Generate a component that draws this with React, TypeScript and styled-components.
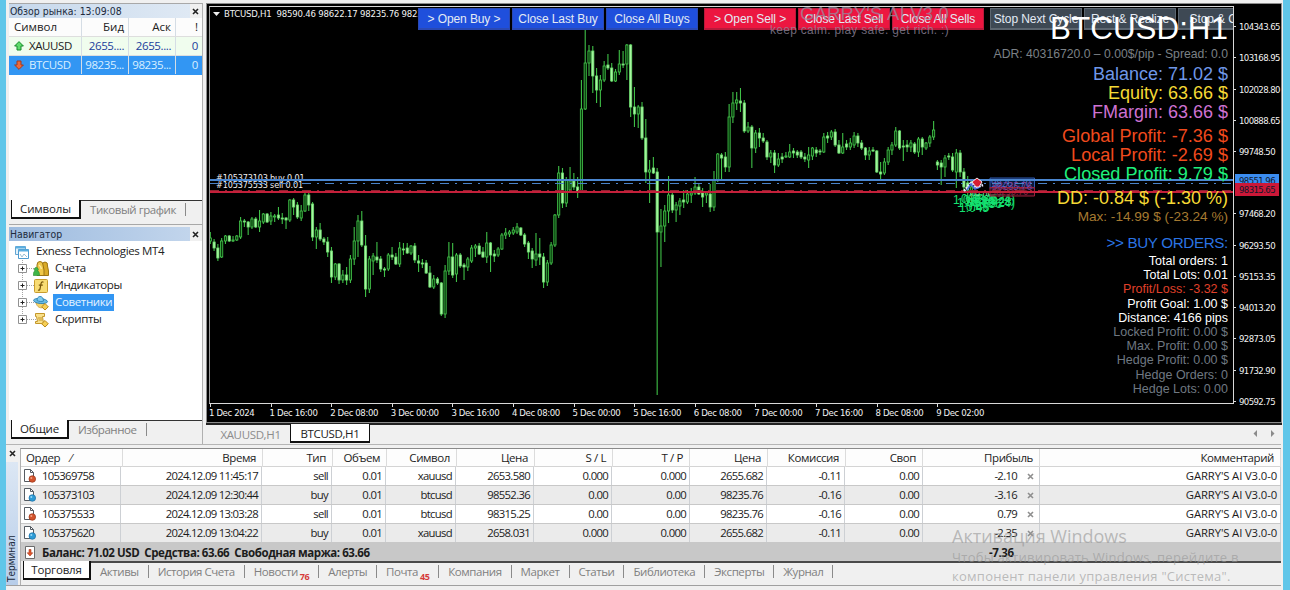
import React from 'react';
import styled, { createGlobalStyle } from 'styled-components';

const UI_FONT = `'Open Sans', 'Noto Sans', sans-serif`;
const CHART_FONT = `'DejaVu Sans Condensed', 'DejaVu Sans', sans-serif`;
const ARIAL = `'Liberation Sans', Arial, sans-serif`;

const GlobalStyle = createGlobalStyle`
	* {
		box-sizing: border-box;
	}
	body {
		margin: 0;
		overflow: hidden;
		font-family: ${UI_FONT};
		font-size: 11.5px;
		color: #1c1c1c;
		background: #f0f0f0;
	}
`;

const Desktop = styled.div`
	width: 1290px;
	height: 590px;
	display: flex;
	background: #f0f0f0;
	overflow: hidden;
	position: relative;
`;
const Edge = styled.div<{ $width: number }>`
	width: ${({ $width }) => $width}px;
	flex: none;
	background: #60c6e9;
`;
const Window = styled.div`
	flex: 1;
	min-width: 0;
	display: flex;
	flex-direction: column;
`;
const Upper = styled.div`
	display: flex;
	height: 444px;
	flex: none;
`;
const SideColumn = styled.div`
	width: 198px;
	flex: none;
	display: flex;
	flex-direction: column;
	padding: 3px 1px 0 3px;
`;
const Panel = styled.div<{ $height: number }>`
	height: ${({ $height }) => $height}px;
	flex: none;
	display: flex;
	flex-direction: column;
	border-top: 1px solid #a8a8a8;
	border-right: 1px solid #b0b0b0;
`;
const PanelTitle = styled.div`
	height: 14px;
	flex: none;
	display: flex;
	align-items: center;
	justify-content: space-between;
	padding: 0 3px 0 1px;
	font-family: ${CHART_FONT};
	font-size: 10.4px;
	line-height: 12px;
	color: #202a3c;
	background: linear-gradient(90deg, #c6d8ec, #dfe9f4 94%, #f0f0f0 94%);
`;
const NavTitle = styled(PanelTitle)`
	margin-top: 2px;
	background: linear-gradient(90deg, #9dbbdf, #c2d5ec 94%, #f0f0f0 94%);
`;
const PanelBody = styled.div`
	flex: 1;
	min-height: 0;
	background: #fff;
`;
const CloseMark = styled.svg`
	width: 7px;
	height: 7px;
	flex: none;
`;

const MarketRow = styled.div<{ $kind: 'head' | 'up' | 'selected' }>`
	display: grid;
	grid-template-columns: 73px 47px 47px 1fr;
	height: 19px;
	letter-spacing: ${({ $kind }) => ($kind === 'head' ? 0 : -0.4)}px;
	line-height: 18px;
	color: ${({ $kind }) => ({ head: '#222', up: '#21409c', selected: '#d9efff' })[$kind]};
	background: ${({ $kind }) => ({ head: '#fcfcfc', up: '#f0fdee', selected: '#3296f3' })[$kind]};
	border-bottom: 1px solid ${({ $kind }) => ($kind === 'selected' ? '#3296f3' : '#dedede')};
`;
const MarketCell = styled.div<{ $symbol?: boolean; $dark?: boolean }>`
	display: flex;
	align-items: center;
	justify-content: ${({ $symbol }) => ($symbol ? 'flex-start' : 'flex-end')};
	gap: 5px;
	padding: 0 4px 0 ${({ $symbol }) => ($symbol ? 5 : 0)}px;
	border-right: 1px solid #d5dde5;
	color: ${({ $dark }) => ($dark ? '#222' : 'inherit')};
	white-space: nowrap;
	&:last-child {
		border-right: 0;
	}
`;

const SheetTabs = styled.div`
	height: 24px;
	flex: none;
	display: flex;
	padding-left: 2px;
	background: #f0f0f0;
`;
const ActiveSheet = styled.div<{ $width: number }>`
	width: ${({ $width }) => $width}px;
	flex: none;
	height: 19px;
	border: solid #111;
	border-width: 0 2px 2px 1px;
	background: #fff;
	text-align: center;
	line-height: 18px;
	letter-spacing: -0.15px;
`;
const SheetRest = styled.div<{ $heavy?: boolean }>`
	flex: 1;
	display: flex;
	align-items: flex-start;
	border-top: ${({ $heavy }) => ($heavy ? '2px solid #4a4a4a' : '1px solid #333')};
	color: #808080;
`;
const Sheet = styled.div`
	padding: 0 9px;
	margin-top: 2px;
	height: 13px;
	line-height: 13px;
	letter-spacing: -0.44px;
	border-right: 1px solid #8a8a8a;
	white-space: nowrap;
`;

const Tree = styled.div`
	display: flex;
	flex-direction: column;
	padding: 2px 0 0 6px;
`;
const TreeRow = styled.div<{ $child?: boolean }>`
	display: flex;
	align-items: center;
	height: 17px;
	gap: ${({ $child }) => ($child ? 4 : 5)}px;
	padding-left: ${({ $child }) => ($child ? 3 : 0)}px;
	letter-spacing: -0.35px;
	color: #222;
`;
const TreeLabel = styled.span<{ $selected?: boolean }>`
	height: 17px;
	line-height: 16px;
	padding: 0 2px;
	white-space: nowrap;
	color: ${({ $selected }) => ($selected ? '#e4f3ff' : 'inherit')};
	background: ${({ $selected }) => ($selected ? '#3296f3' : 'transparent')};
`;

const ChartColumn = styled.div`
	flex: 1;
	min-width: 0;
	padding: 3px 1px 0 2px;
	display: flex;
	flex-direction: column;
`;
const ChartWindow = styled.div`
	height: 420px;
	flex: none;
	position: relative;
	background: #000;
	border: 1px solid #8c8c8c;
	padding: 2px 0 0 2px;
	display: grid;
	grid-template-columns: 1025px 1fr;
	grid-template-rows: 398px 1fr;
	overflow: hidden;
	font-family: ${CHART_FONT};
	color: #f2f2f2;
`;
const Plot = styled.div`
	position: relative;
	overflow: hidden;
	border: 1px solid #d8d8d8;
	border-left-color: #999;
`;
const Drawing = styled.svg`
	position: absolute;
	left: -1px;
	top: -1px;
`;
const PriceAxis = styled.div`
	position: relative;
	padding-top: 5px;
	font-size: 9.5px;
	letter-spacing: -0.6px;
`;
const Price = styled.div<{ $hidden?: boolean }>`
	height: 31.22px;
	display: flex;
	align-items: center;
	gap: 3px;
	visibility: ${({ $hidden }) => ($hidden ? 'hidden' : 'visible')};
	&::before {
		content: '';
		width: 2px;
		height: 1px;
		background: #ddd;
	}
`;
const PriceTag = styled.div<{ $top: number; $color: string }>`
	position: absolute;
	left: 1px;
	top: ${({ $top }) => $top}px;
	width: 44px;
	height: 13px;
	padding-left: 4px;
	line-height: 13px;
	color: #10182c;
	background: ${({ $color }) => $color};
`;
const TimeAxis = styled.div`
	grid-column: 1 / -1;
	display: flex;
	font-size: 9.5px;
	letter-spacing: -0.38px;
`;
const Time = styled.div`
	width: 60.6px;
	flex: none;
	position: relative;
	padding-top: 3px;
	line-height: 11px;
	white-space: nowrap;
	&::before {
		content: '';
		position: absolute;
		top: 0;
		left: 1px;
		width: 1px;
		height: 3px;
		background: #ddd;
	}
`;
const ChartCaption = styled.div`
	position: absolute;
	left: 3px;
	top: 0;
	display: flex;
	align-items: center;
	gap: 4px;
	font-size: 9.5px;
	line-height: 14px;
	letter-spacing: -0.2px;
	white-space: pre;
`;
const ButtonBar = styled.div`
	position: absolute;
	left: 208px;
	top: 1px;
	display: flex;
	gap: 6px;
`;
const ButtonGroup = styled.div`
	display: flex;
	gap: 2px;
`;
const TradeButton = styled.div<{ $color: string; $edge: string }>`
	width: 92px;
	height: 22px;
	border: 1px solid ${({ $edge }) => $edge};
	border-bottom-width: 2px;
	background: ${({ $color }) => $color};
	color: #e4ebf4;
	font-family: ${ARIAL};
	font-size: 12px;
	letter-spacing: -0.1px;
	line-height: 20px;
	text-align: center;
	white-space: nowrap;
`;
const Brand = styled.div`
	position: absolute;
	right: 284px;
	top: -3px;
	display: flex;
	flex-direction: column;
	align-items: flex-end;
	font-family: ${ARIAL};
	color: rgba(150, 140, 160, 0.75);
	white-space: nowrap;
`;
const BrandName = styled.div`
	font-size: 18.5px;
	line-height: 20px;
	letter-spacing: 0.2px;
`;
const BrandMotto = styled.div`
	font-size: 12px;
	line-height: 13px;
	letter-spacing: 0.28px;
`;
const Info = styled.div`
	position: absolute;
	right: 5px;
	top: 4px;
	display: flex;
	flex-direction: column;
	align-items: flex-end;
	font-family: ${ARIAL};
	white-space: nowrap;
`;
const InfoLine = styled.div<{ $size: number; $height: number; $color: string; $gap?: number; $track?: number }>`
	font-size: ${({ $size }) => $size}px;
	height: ${({ $height }) => $height}px;
	line-height: ${({ $height }) => $height}px;
	margin-top: ${({ $gap = 0 }) => $gap}px;
	letter-spacing: ${({ $track = 0 }) => $track}px;
	color: ${({ $color }) => $color};
`;

const ChartTabs = styled.div`
	flex: 1;
	display: flex;
	border-top: 2px solid #222;
	background: #f0f0f0;
`;
const ChartTab = styled.div<{ $active?: boolean }>`
	width: ${({ $active }) => ($active ? 80 : 84)}px;
	margin-top: ${({ $active }) => ($active ? -1 : 0)}px;
	height: 19px;
	padding-left: ${({ $active }) => ($active ? 0 : 5)}px;
	text-align: center;
	line-height: 19px;
	letter-spacing: -0.35px;
	color: ${({ $active }) => ($active ? '#222' : '#8c8c8c')};
	background: ${({ $active }) => ($active ? '#fff' : 'transparent')};
	border: solid #111;
	border-width: ${({ $active }) => ($active ? '0 1px 2px 1px' : '0')};
`;
const Scroller = styled.svg`
	margin: 3px 1px 0 auto;
	width: 30px;
	height: 12px;
`;

const Terminal = styled.div`
	flex: none;
	height: 142px;
	display: flex;
	margin-right: 2px;
	border: solid #a0a0a0;
	border-width: 1px 0;
	border-top-color: #b5b5b5;
`;
const TerminalRail = styled.div`
	width: 14px;
	flex: none;
	display: flex;
	flex-direction: column;
	align-items: center;
	padding: 5px 2px 0 0;
`;
const RailTitle = styled.div`
	flex: 1;
	width: 12px;
	margin-top: 5px;
	padding: 3px 0;
	writing-mode: vertical-rl;
	transform: rotate(180deg);
	line-height: 12px;
	font-family: ${CHART_FONT};
	font-size: 10px;
	color: #202a3c;
	background: linear-gradient(180deg, #b7cde9, #dce7f4);
`;
const TerminalBody = styled.div`
	flex: 1;
	min-width: 0;
	margin-top: 3px;
	display: flex;
	flex-direction: column;
	border-top: 1px solid #8a8a8a;
	border-left: 1px solid #b0b0b0;
`;
const OrderHead = styled.div`
	display: grid;
	grid-template-columns: 102px 140px 70px 54px 70px 78px 78px 77px 78px 78px 77px 117px 1fr;
	height: 18px;
	background: #fdfdfd;
	border-bottom: 1px solid #d4d4d4;
`;
const HeadCell = styled.div`
	padding: 0 6px 0 5px;
	text-align: right;
	line-height: 18px;
	letter-spacing: -0.4px;
	border-right: 1px solid #dcdcdc;
	white-space: pre;
	&:first-child {
		text-align: left;
	}
`;
const OrderRow = styled.div<{ $alt: boolean }>`
	display: grid;
	grid-template-columns: 100px 141px 70px 54px 70px 78px 78px 78px 77px 78px 78px 117px 1fr;
	height: 19px;
	background: ${({ $alt }) => ($alt ? '#ebebeb' : '#fff')};
	border-bottom: 1px solid #c8c8c8;
`;
const OrderCell = styled.div<{ $profit?: boolean }>`
	display: flex;
	align-items: center;
	justify-content: flex-end;
	gap: 10px;
	padding: 0 ${({ $profit }) => ($profit ? 5 : 3)}px 0 2px;
	font-size: 11.3px;
	line-height: 18px;
	letter-spacing: -0.68px;
	border-right: 1px solid #cdd0d4;
	white-space: nowrap;
	&:first-child {
		justify-content: flex-start;
		gap: 6px;
	}
	&:last-child {
		letter-spacing: -0.12px;
	}
`;
const BalanceRow = styled.div`
	display: flex;
	align-items: center;
	height: 18px;
	padding-left: 3px;
	gap: 6px;
	font-weight: 700;
	letter-spacing: -0.43px;
	background: #c8c8c8;
	white-space: pre;
`;
const BalanceText = styled.span`
	width: 941px;
`;
const TerminalTabs = styled.div`
	height: 20px;
	flex: none;
	display: flex;
	padding-left: 2px;
`;
const Count = styled.span`
	color: #d63b3b;
	font-size: 9px;
	font-weight: 700;
	letter-spacing: -0.5px;
	position: relative;
	top: 4px;
	margin-left: 2px;
`;
const Watermark = styled.div`
	position: absolute;
	left: 952px;
	top: 525px;
	color: rgba(150, 150, 150, 0.62);
	font-size: 13px;
	line-height: 19px;
	letter-spacing: 0.26px;
	white-space: nowrap;
`;
const WatermarkTitle = styled.div`
	font-size: 18px;
	line-height: 23px;
	letter-spacing: 0;
`;

// [high, body top, body bottom, low, rising] in plot pixels
type Candle = [number, number, number, number, number];
const candles: Candle[] = [
	[232, 238, 241, 244, 1], [239, 242, 248, 251, 0], [244, 248, 258, 261, 0], [238, 241, 257, 258, 1],
	[235, 236, 241, 244, 1], [235, 236, 241, 242, 0], [236, 240, 241, 242, 1], [235, 236, 240, 241, 1],
	[217, 221, 237, 239, 1], [219, 221, 222, 227, 0], [221, 222, 227, 235, 0], [217, 219, 227, 229, 1],
	[217, 219, 227, 228, 0], [210, 221, 227, 232, 1], [213, 214, 222, 224, 1], [213, 214, 222, 223, 0],
	[212, 216, 221, 225, 1], [214, 216, 217, 222, 1], [207, 215, 218, 220, 0], [213, 218, 219, 224, 0],
	[217, 218, 220, 229, 0], [199, 200, 220, 222, 1], [198, 200, 207, 215, 0], [202, 205, 217, 219, 0],
	[205, 211, 218, 221, 1], [190, 195, 211, 212, 1], [193, 195, 205, 211, 0], [202, 204, 237, 241, 0],
	[227, 230, 237, 249, 1], [223, 230, 239, 241, 0], [237, 239, 242, 245, 0], [237, 242, 252, 257, 0],
	[247, 251, 277, 283, 0], [263, 264, 277, 280, 1], [263, 264, 280, 284, 0], [270, 275, 280, 283, 1],
	[267, 275, 280, 285, 0], [255, 259, 280, 283, 1], [227, 241, 259, 265, 1], [215, 221, 241, 257, 1],
	[211, 221, 245, 247, 0], [235, 246, 289, 297, 0], [256, 259, 289, 293, 1], [253, 256, 261, 275, 1],
	[242, 257, 260, 263, 0], [256, 259, 269, 272, 0], [267, 269, 270, 277, 0], [253, 255, 269, 271, 1],
	[247, 255, 257, 260, 0], [253, 257, 264, 265, 0], [242, 248, 264, 267, 1], [243, 249, 250, 255, 0],
	[243, 248, 253, 254, 0], [245, 246, 253, 255, 1], [243, 246, 260, 263, 0], [255, 261, 263, 272, 0],
	[259, 263, 264, 268, 0], [260, 263, 273, 274, 0], [266, 273, 287, 288, 0], [275, 279, 287, 289, 1],
	[277, 279, 283, 285, 0], [282, 283, 314, 316, 0], [265, 271, 314, 318, 1], [242, 257, 271, 275, 1],
	[243, 257, 275, 278, 0], [253, 255, 274, 282, 1], [253, 255, 266, 268, 0], [263, 265, 267, 280, 0],
	[257, 259, 267, 271, 1], [245, 248, 261, 263, 1], [244, 246, 248, 257, 1], [243, 246, 254, 255, 0],
	[247, 252, 257, 258, 0], [232, 243, 257, 263, 1], [242, 243, 255, 272, 0], [250, 254, 256, 262, 0],
	[247, 249, 255, 257, 1], [233, 235, 249, 250, 1], [228, 233, 235, 239, 1], [230, 232, 234, 237, 1],
	[227, 230, 233, 235, 1], [223, 227, 232, 234, 1], [227, 228, 235, 236, 0], [233, 235, 244, 247, 0],
	[241, 243, 252, 259, 0], [248, 251, 259, 268, 0], [233, 254, 260, 266, 1], [238, 254, 257, 265, 0],
	[253, 257, 282, 288, 0], [260, 263, 282, 286, 1], [242, 245, 263, 265, 1], [214, 215, 245, 247, 1],
	[166, 173, 215, 218, 1], [168, 173, 203, 208, 0], [177, 180, 203, 207, 1], [167, 181, 190, 193, 1],
	[173, 181, 187, 190, 0], [177, 187, 191, 198, 0], [80, 109, 191, 192, 1], [29, 63, 109, 110, 1],
	[45, 51, 63, 76, 1], [46, 51, 76, 93, 0], [68, 76, 90, 103, 0], [75, 80, 90, 107, 1],
	[61, 66, 80, 82, 1], [54, 65, 68, 70, 0], [63, 68, 81, 82, 0], [69, 72, 81, 82, 1],
	[50, 64, 72, 75, 1], [51, 64, 65, 68, 0], [44, 45, 64, 80, 1], [44, 45, 107, 117, 0],
	[87, 107, 114, 127, 0], [105, 107, 114, 128, 1], [102, 107, 138, 140, 0], [119, 138, 172, 183, 0],
	[160, 170, 172, 203, 1], [157, 168, 173, 174, 0], [168, 172, 232, 395, 0], [209, 226, 232, 267, 1],
	[205, 211, 226, 242, 1], [176, 195, 211, 223, 1], [193, 195, 210, 213, 0], [202, 205, 210, 222, 1],
	[198, 201, 206, 215, 1], [190, 200, 202, 208, 0], [190, 194, 202, 204, 1], [188, 193, 195, 203, 1],
	[177, 187, 193, 195, 1], [183, 187, 194, 195, 0], [188, 193, 197, 207, 0], [192, 193, 195, 203, 1],
	[184, 194, 207, 212, 0], [171, 180, 207, 211, 1], [153, 154, 180, 182, 1], [153, 155, 158, 180, 0],
	[152, 157, 167, 172, 0], [104, 117, 167, 172, 1], [92, 103, 117, 123, 1], [92, 100, 103, 110, 1],
	[88, 101, 103, 112, 0], [100, 103, 131, 133, 0], [122, 127, 131, 133, 1], [125, 127, 148, 168, 0],
	[130, 133, 148, 153, 1], [128, 133, 138, 147, 0], [133, 138, 141, 143, 0], [140, 142, 157, 160, 0],
	[150, 153, 157, 163, 1], [150, 153, 165, 173, 0], [153, 159, 165, 167, 1], [153, 157, 159, 163, 0],
	[152, 156, 157, 158, 1], [144, 152, 157, 158, 1], [148, 151, 153, 158, 0], [150, 152, 155, 158, 0],
	[150, 152, 157, 159, 0], [153, 157, 159, 162, 0], [147, 155, 160, 168, 1], [147, 148, 156, 160, 1],
	[147, 150, 153, 157, 0], [149, 151, 152, 155, 0], [133, 137, 152, 153, 1], [132, 136, 138, 143, 0],
	[130, 132, 137, 140, 1], [129, 132, 145, 147, 0], [140, 145, 153, 154, 0], [133, 147, 153, 154, 1],
	[140, 144, 147, 150, 0], [138, 143, 147, 150, 1], [132, 136, 145, 148, 1], [133, 136, 143, 147, 0],
	[140, 143, 148, 150, 0], [147, 148, 155, 160, 0], [147, 151, 155, 160, 1], [147, 150, 151, 152, 0],
	[150, 151, 172, 173, 0], [162, 172, 174, 179, 0], [158, 162, 173, 175, 1], [147, 150, 162, 165, 1],
	[142, 145, 150, 155, 1], [127, 131, 145, 147, 1], [130, 131, 148, 150, 0], [140, 146, 147, 161, 0],
	[140, 145, 147, 152, 0], [140, 143, 147, 152, 1], [142, 144, 152, 154, 0], [137, 139, 152, 157, 1],
	[137, 139, 147, 155, 0], [142, 143, 148, 150, 1], [135, 137, 143, 147, 1], [121, 130, 137, 140, 1],
	[160, 162, 165, 170, 0], [160, 163, 167, 185, 0], [155, 158, 167, 177, 1], [153, 156, 157, 160, 0],
	[153, 157, 170, 172, 0], [149, 153, 172, 188, 1], [150, 153, 172, 177, 0], [168, 172, 187, 193, 0],
	[176, 183, 190, 204, 0], [181, 187, 196, 207, 1],
];

const prices = [
	'104343.65', '103168.95', '102028.80', '100888.65', '99748.50', '', '97468.20',
	'96293.50', '95153.35', '94013.20', '92873.05', '91732.90', '90592.75',
];
const times = [
	'1 Dec 2024', '1 Dec 16:00', '2 Dec 08:00', '3 Dec 00:00', '3 Dec 16:00', '4 Dec 08:00', '5 Dec 00:00',
	'5 Dec 16:00', '6 Dec 08:00', '7 Dec 00:00', '7 Dec 16:00', '8 Dec 08:00', '9 Dec 02:00',
];

const info = [
	{ text: 'BTCUSD:H1', size: 31.4, height: 35, color: '#fff' },
	{ text: 'ADR: 40316720.0 – 0.00$/pip - Spread: 0.0', size: 12.2, height: 16, color: '#7b8186' },
	{ text: 'Balance: 71.02 $', size: 18, height: 19, color: '#6f97e8', gap: 3 },
	{ text: 'Equity: 63.66 $', size: 18, height: 19, color: '#f5d935' },
	{ text: 'FMargin: 63.66 $', size: 18, height: 19, color: '#ce72d2' },
	{ text: 'Global Profit: -7.36 $', size: 18.1, height: 19, color: '#f04a1d', gap: 5 },
	{ text: 'Local Profit: -2.69 $', size: 18.1, height: 19, color: '#f04a1d' },
	{ text: 'Closed Profit: 9.79 $', size: 18.1, height: 18.5, color: '#1ff07c' },
	{ text: 'DD: -0.84 $ (-1.30 %)', size: 18, height: 19, color: '#f5d935', gap: 5.5 },
	{ text: 'Max: -14.99 $ (-23.24 %)', size: 13.6, height: 18, color: '#a67a30' },
	{ text: '>> BUY ORDERS:', size: 15.2, height: 20, color: '#2b74e4', gap: 7, track: -0.35 },
	{ text: 'Total orders: 1', size: 12.5, height: 14.2, color: '#fff', gap: 1 },
	{ text: 'Total Lots: 0.01', size: 12.5, height: 14.2, color: '#fff' },
	{ text: 'Profit/Loss: -3.32 $', size: 12.5, height: 14.2, color: '#e0402a' },
	{ text: 'Profit Goal: 1.00 $', size: 12.5, height: 14.2, color: '#fff' },
	{ text: 'Distance: 4166 pips', size: 12.5, height: 14.2, color: '#fff' },
	{ text: 'Locked Profit: 0.00 $', size: 12.5, height: 14.2, color: '#6f7882' },
	{ text: 'Max. Profit: 0.00 $', size: 12.5, height: 14.2, color: '#6f7882' },
	{ text: 'Hedge Profit: 0.00 $', size: 12.5, height: 14.2, color: '#6f7882' },
	{ text: 'Hedge Orders: 0', size: 12.5, height: 14.2, color: '#6f7882' },
	{ text: 'Hedge Lots: 0.00', size: 12.5, height: 14.2, color: '#6f7882' },
];

const buttonGroups = [
	{ color: '#1f4fdc', edge: '#2a49b4', labels: ['> Open Buy >', 'Close Last Buy', 'Close All Buys'] },
	{ color: '#ec1640', edge: '#b81a3c', labels: ['> Open Sell >', 'Close Last Sell', 'Close All Sells'] },
	{ color: '#3e4954', edge: '#5c6670', labels: ['Stop Next Cycle', 'Rest & Realize', 'Stop & Close'] },
];

const orderHeads = [
	'Ордер    ⁄', 'Время', 'Тип', 'Объем', 'Символ', 'Цена', 'S / L', 'T / P', 'Цена', 'Комиссия', 'Своп', 'Прибыль', 'Комментарий',
];
const orders = [
	['105369758', '2024.12.09 11:45:17', 'sell', '0.01', 'xauusd', '2653.580', '0.000', '0.000', '2655.682', '-0.11', '0.00', '-2.10'],
	['105373103', '2024.12.09 12:30:44', 'buy', '0.01', 'btcusd', '98552.36', '0.00', '0.00', '98235.76', '-0.16', '0.00', '-3.16'],
	['105375533', '2024.12.09 13:03:28', 'sell', '0.01', 'btcusd', '98315.25', '0.00', '0.00', '98235.76', '-0.16', '0.00', '0.79'],
	['105375620', '2024.12.09 13:04:22', 'buy', '0.01', 'xauusd', '2658.031', '0.000', '0.000', '2655.682', '-0.11', '0.00', '-2.35'],
];
const terminalTabs: { label: string; count?: number }[] = [
	{ label: 'Активы' }, { label: 'История Счета' }, { label: 'Новости', count: 76 }, { label: 'Алерты' },
	{ label: 'Почта', count: 45 }, { label: 'Компания' }, { label: 'Маркет' }, { label: 'Статьи' },
	{ label: 'Библиотека' }, { label: 'Эксперты' }, { label: 'Журнал' },
];

const Close = ({ color = '#222' }: { color?: string }) => (
	<CloseMark viewBox='0 0 7 7'>
		<path d='M1 1l5 5M6 1l-5 5' stroke={color} strokeWidth='1.6' />
	</CloseMark>
);

const Arrow = ({ up }: { up?: boolean }) => (
	<svg width='10' height='10' viewBox='0 0 10 10'>
		<path
			d='M5 .6L9.4 5H7v4H3V5H.6z'
			transform={up ? undefined : 'rotate(180 5 5)'}
			fill={up ? '#5fdc6c' : '#ee6a3c'}
			stroke={up ? '#178a2c' : '#a5391c'}
			strokeWidth='1'
		/>
	</svg>
);

const TreeLines = styled.svg`
	margin-right: -7px;
`;
const Expander = ({ last }: { last?: boolean }) => (
	<TreeLines width='18' height='17' viewBox='0 0 18 17'>
		<path d={last ? 'M4.5 0v4M9 8.5h9' : 'M4.5 0v4M4.5 13v4M9 8.5h9'} stroke='#a5a5a5' strokeDasharray='1 1' />
		<path d='M.5 4.5h8v8h-8z' fill='#fff' stroke='#919191' />
		<path d='M2.5 8.5h4M4.5 6.5v4' stroke='#222' />
	</TreeLines>
);

const TerminalIcon = () => (
	<svg width='14' height='14' viewBox='0 0 14 14'>
		<path d='M.5 1.5h10v8H.5z' fill='#e3f2fb' stroke='#62a6d4' />
		<path d='M3.5 4.5h10v9h-10z' fill='#fff' stroke='#4f9bcf' />
		<path d='M3.5 5.5h10M1 2.5h9' stroke='#5aaee0' strokeWidth='2' />
		<path d='M5 9l2 3 2-3 3 3' fill='none' stroke='#9cc0d4' />
	</svg>
);
const AccountsIcon = () => (
	<svg width='16' height='16' viewBox='0 0 16 16'>
		<path d='M9 14.500V5q0-4 3-4t2.500 4l1 5v4.500z' fill='#d9aa28' stroke='#9c7414' />
		<path d='M4 14.500V4q0-3.500 3-3.500t3 3.500l1 5v5.500z' fill='#f0c84a' stroke='#9c7414' />
		<path d='M6 4q2 1.500 2.500 4' fill='none' stroke='#fbeaa4' strokeWidth='1.500' />
		<path d='M.3 14.500c0-3 .7-4.500 1.700-4.500a2 2 0 112.500 0c1.500 0 2 2 2 4.500z' fill='#3fb548' stroke='#288a33' strokeWidth='.6' />
	</svg>
);
const IndicatorIcon = () => (
	<svg width='16' height='16' viewBox='0 0 16 16'>
		<rect x='1.5' y='1.5' width='13' height='13' rx='1' fill='#f8dc74' stroke='#c99c2c' />
		<path d='M10.5 4.2c-2-.8-2.3.4-2.6 2L7 11c-.3 1.2-1 1.4-2 1M5.8 7.2h4' fill='none' stroke='#77550a' strokeWidth='1.2' />
	</svg>
);
const ExpertIcon = () => (
	<svg width='16' height='16' viewBox='0 0 16 16'>
		<path d='M3 8c1 4 4 5.500 7 4.500l2-4z' fill='#f3d36a' stroke='#c4972a' strokeWidth='.7' />
		<ellipse cx='7.500' cy='6' rx='7' ry='2.500' transform='rotate(6 7.500 6)' fill='#6bbce4' stroke='#2f84b5' strokeWidth='.9' />
		<path d='M4 5.500c0-5.500 6.500-5.500 6.500.6-2 .8-4.500.5-6.500-.6z' fill='#7fcaee' stroke='#2f84b5' strokeWidth='.9' />
		<path d='M12 8.500l3.300 3.300L12 15l-3.300-3.200z' fill='#f5cf55' stroke='#bb8a1a' />
	</svg>
);
const ScriptIcon = () => (
	<svg width='16' height='16' viewBox='0 0 16 16'>
		<path d='M2.500 1.500h9v3h-2l1 7h-8v-2h2l-1-5h-1z' fill='#f9e08a' stroke='#c4972a' />
		<path d='M5 6h4M5.500 8h4' stroke='#c4972a' />
		<path d='M12 8.500l3.300 3.300L12 15l-3.300-3.200z' fill='#f5cf55' stroke='#bb8a1a' />
	</svg>
);
const OrderIcon = ({ sell }: { sell: boolean }) => (
	<svg width='13' height='14' viewBox='0 0 13 14'>
		<path d='M1.500.500h6l3 3v9h-9z' fill='#fff' stroke='#555b62' />
		<path d='M7.500.500v3h3' fill='none' stroke='#555b62' />
		<circle cx='9.300' cy='10' r='3.300' fill={sell ? '#d2532c' : '#2c9bd6'} stroke={sell ? '#98371a' : '#1c6fa3'} strokeWidth='.7' />
		<circle cx='8.300' cy='9' r='1' fill={sell ? '#f0a184' : '#98d6f5'} />
	</svg>
);
const BalanceIcon = () => (
	<svg width='12' height='13' viewBox='0 0 12 13'>
		<path d='M1.500.500h9v12h-9z' fill='#fff' stroke='#6b6b6b' />
		<path d='M6 10L3.200 6.800H5V3.500h2v3.300h1.800z' fill='#e0552c' stroke='#a8371a' strokeWidth='.6' />
	</svg>
);

const PriceDrawing = () => (
	<Drawing width='1025' height='398' viewBox='209 6 1025 398'>
		<g fontFamily={CHART_FONT} fontSize='9' letterSpacing='-0.15' fill='#f0f0f0'>
			<text x='216' y='181'>#105373103 buy 0.01</text>
			<text x='216' y='188'>#105375533 sell 0.01</text>
		</g>
		{candles.map(([high, top, bottom, low, rising], i) => {
			const x = 210.3 + i * 3.787;
			return (
				<g key={i}>
					<path d={`M${x} ${high}V${low}`} stroke='#3fc047' strokeWidth='1.1' />
					<rect
						x={x - 1.1}
						y={top}
						width='2.2'
						height={Math.max(bottom - top, 1)}
						fill={rising ? '#063a0a' : '#a6f7a0'}
						stroke={rising ? '#46c94e' : '#6fdc70'}
						strokeWidth='0.8'
					/>
				</g>
			);
		})}
		<g fontFamily={ARIAL} fontSize='12' fill='#14e070'>
			<text x='953' y='204'>1.0 7.62</text>
			<text x='957' y='207'>1.05 (2.24)</text>
			<text x='961' y='203'>0.48 1.24)</text>
			<text x='959' y='212'>1.045</text>
			<text x='965' y='206'>36.80 28</text>
			<text x='968' y='203'>82.45</text>
			<text x='966' y='211'>0.48</text>
			<text x='972' y='208'>40.36</text>
			<text x='974' y='205'>83.8</text>
			<text x='970' y='196' fontSize='9' fill='#7fdc98'>no.nc</text>
		</g>
		<path d='M990 178h44.500v10.500H990z' fill='#0d1838' stroke='#2f5cb4' />
		<path d='M990 187.500h44.500v8.500H990z' fill='#2c0a1c' fillOpacity='.6' stroke='#a0203c' />
		<text x='991' y='187' fontFamily={CHART_FONT} fontSize='10' letterSpacing='-0.4' fill='#4a68c4'>98267.70</text>
		<text x='992' y='190' fontFamily={CHART_FONT} fontSize='10' letterSpacing='-0.4' fill='#7c3f94'>98235.76</text>
		<text x='991' y='195' fontFamily={CHART_FONT} fontSize='9' letterSpacing='-0.2' fill='#8c1f3c'>98236.76</text>
		<path d='M210 183.500h1023' stroke='#4a82c8' strokeDasharray='9 6 2 6' />
		<path d='M210 190.500h1023' stroke='#8e2230' strokeDasharray='9 6 2 6' />
		<path d='M210 180h1023' stroke='#4a86d0' strokeWidth='2' />
		<path d='M210 192h1023' stroke='#c4203a' strokeWidth='2' />
		<path d='M964 191l7-8 4 5 8-3' fill='none' stroke='#e9e4ff' strokeWidth='2.500' strokeDasharray='2 1' />
		<path d='M967 190l4-6 4 5 5-2' fill='none' stroke='#4b6be0' strokeWidth='1.500' />
		<path d='M972 182l5-4 5 4-3 5h-3z' fill='#d81e34' stroke='#fff' strokeWidth='.9' />
	</Drawing>
);

const MarketWatch = () => (
	<Panel $height={221}>
		<PanelTitle>
			Обзор рынка: 13:09:08 <Close />
		</PanelTitle>
		<PanelBody>
			<MarketRow $kind='head'>
				<MarketCell $symbol>Символ</MarketCell>
				<MarketCell>Бид</MarketCell>
				<MarketCell>Аск</MarketCell>
				<MarketCell>!</MarketCell>
			</MarketRow>
			<MarketRow $kind='up'>
				<MarketCell $symbol $dark>
					<Arrow up /> XAUUSD
				</MarketCell>
				<MarketCell>2655....</MarketCell>
				<MarketCell>2655....</MarketCell>
				<MarketCell>0</MarketCell>
			</MarketRow>
			<MarketRow $kind='selected'>
				<MarketCell $symbol>
					<Arrow /> BTCUSD
				</MarketCell>
				<MarketCell>98235...</MarketCell>
				<MarketCell>98235...</MarketCell>
				<MarketCell>0</MarketCell>
			</MarketRow>
		</PanelBody>
		<SheetTabs>
			<ActiveSheet $width={70}>Символы</ActiveSheet>
			<SheetRest>
				<Sheet>Тиковый график</Sheet>
			</SheetRest>
		</SheetTabs>
	</Panel>
);

const Navigator = () => (
	<Panel $height={220}>
		<NavTitle>
			Навигатор <Close />
		</NavTitle>
		<PanelBody>
			<Tree>
				<TreeRow>
					<TerminalIcon />
					<TreeLabel>Exness Technologies MT4</TreeLabel>
				</TreeRow>
				<TreeRow $child>
					<Expander />
					<AccountsIcon />
					<TreeLabel>Счета</TreeLabel>
				</TreeRow>
				<TreeRow $child>
					<Expander />
					<IndicatorIcon />
					<TreeLabel>Индикаторы</TreeLabel>
				</TreeRow>
				<TreeRow $child>
					<Expander />
					<ExpertIcon />
					<TreeLabel $selected>Советники</TreeLabel>
				</TreeRow>
				<TreeRow $child>
					<Expander last />
					<ScriptIcon />
					<TreeLabel>Скрипты</TreeLabel>
				</TreeRow>
			</Tree>
		</PanelBody>
		<SheetTabs>
			<ActiveSheet $width={58}>Общие</ActiveSheet>
			<SheetRest>
				<Sheet>Избранное</Sheet>
			</SheetRest>
		</SheetTabs>
	</Panel>
);

const Chart = () => (
	<ChartWindow>
		<Plot>
			<PriceDrawing />
			<ChartCaption>
				<svg width='7' height='4' viewBox='0 0 7 4'>
					<path d='M0 0h7L3.500 4z' fill='#eee' />
				</svg>
				{'BTCUSD,H1  98590.46 98622.17 98235.76 98235.76'}
			</ChartCaption>
			<ButtonBar>
				{buttonGroups.map((group) => (
					<ButtonGroup key={group.color}>
						{group.labels.map((label) => (
							<TradeButton key={label} $color={group.color} $edge={group.edge}>
								{label}
							</TradeButton>
						))}
					</ButtonGroup>
				))}
			</ButtonBar>
			<Brand>
				<BrandName>GARRY'S AI V3.0</BrandName>
				<BrandMotto>keep calm. play safe. get rich. :)</BrandMotto>
			</Brand>
			<Info>
				{info.map(({ text, size, height, color, gap, track }) => (
					<InfoLine key={text} $size={size} $height={height} $color={color} $gap={gap} $track={track}>
						{text}
					</InfoLine>
				))}
			</Info>
		</Plot>
		<PriceAxis>
			{prices.map((price, i) => (
				<Price key={i} $hidden={!price}>
					{price}
				</Price>
			))}
			<PriceTag $top={168} $color='#3b8df0'>98551.96</PriceTag>
			<PriceTag $top={177} $color='#cc1838'>98315.65</PriceTag>
		</PriceAxis>
		<TimeAxis>
			{times.map((time) => (
				<Time key={time}>{time}</Time>
			))}
		</TimeAxis>
	</ChartWindow>
);

export default function App() {
	return (
		<Desktop>
			<GlobalStyle />
			<Edge $width={6} />
			<Window>
				<Upper>
					<SideColumn>
						<MarketWatch />
						<Navigator />
					</SideColumn>
					<ChartColumn>
						<Chart />
						<ChartTabs>
							<ChartTab>XAUUSD,H1</ChartTab>
							<ChartTab $active>BTCUSD,H1</ChartTab>
							<Scroller viewBox='0 0 30 12'>
								<path d='M6 2v7L2.500 5.500zM20 2v7l3.500-3.500z' fill='#8b8b8b' />
							</Scroller>
						</ChartTabs>
					</ChartColumn>
				</Upper>
				<Terminal>
					<TerminalRail>
						<Close />
						<RailTitle>Терминал</RailTitle>
					</TerminalRail>
					<TerminalBody>
						<OrderHead>
							{orderHeads.map((head, i) => (
								<HeadCell key={i}>{head}</HeadCell>
							))}
						</OrderHead>
						{orders.map((order, row) => (
							<OrderRow key={order[0]} $alt={row % 2 === 1}>
								{order.map((value, i) => (
									<OrderCell key={i} $profit={i === 11}>
										{i === 0 && <OrderIcon sell={order[2] === 'sell'} />}
										{value}
										{i === 11 && <Close color='#8e8e8e' />}
									</OrderCell>
								))}
								<OrderCell>GARRY'S AI V3.0-0</OrderCell>
							</OrderRow>
						))}
						<BalanceRow>
							<BalanceIcon />
							<BalanceText>{'Баланс: 71.02 USD  Средства: 63.66  Свободная маржа: 63.66'}</BalanceText>
							-7.36
						</BalanceRow>
						<TerminalTabs>
							<ActiveSheet $width={68}>Торговля</ActiveSheet>
							<SheetRest $heavy>
								{terminalTabs.map(({ label, count }) => (
									<Sheet key={label}>
										{label}
										{count && <Count>{count}</Count>}
									</Sheet>
								))}
							</SheetRest>
						</TerminalTabs>
					</TerminalBody>
				</Terminal>
			</Window>
			<Edge $width={7} />
			<Watermark>
				<WatermarkTitle>Активация Windows</WatermarkTitle>
				<div>Чтобы активировать Windows, перейдите в</div>
				<div>компонент панели управления "Система".</div>
			</Watermark>
		</Desktop>
	);
}
